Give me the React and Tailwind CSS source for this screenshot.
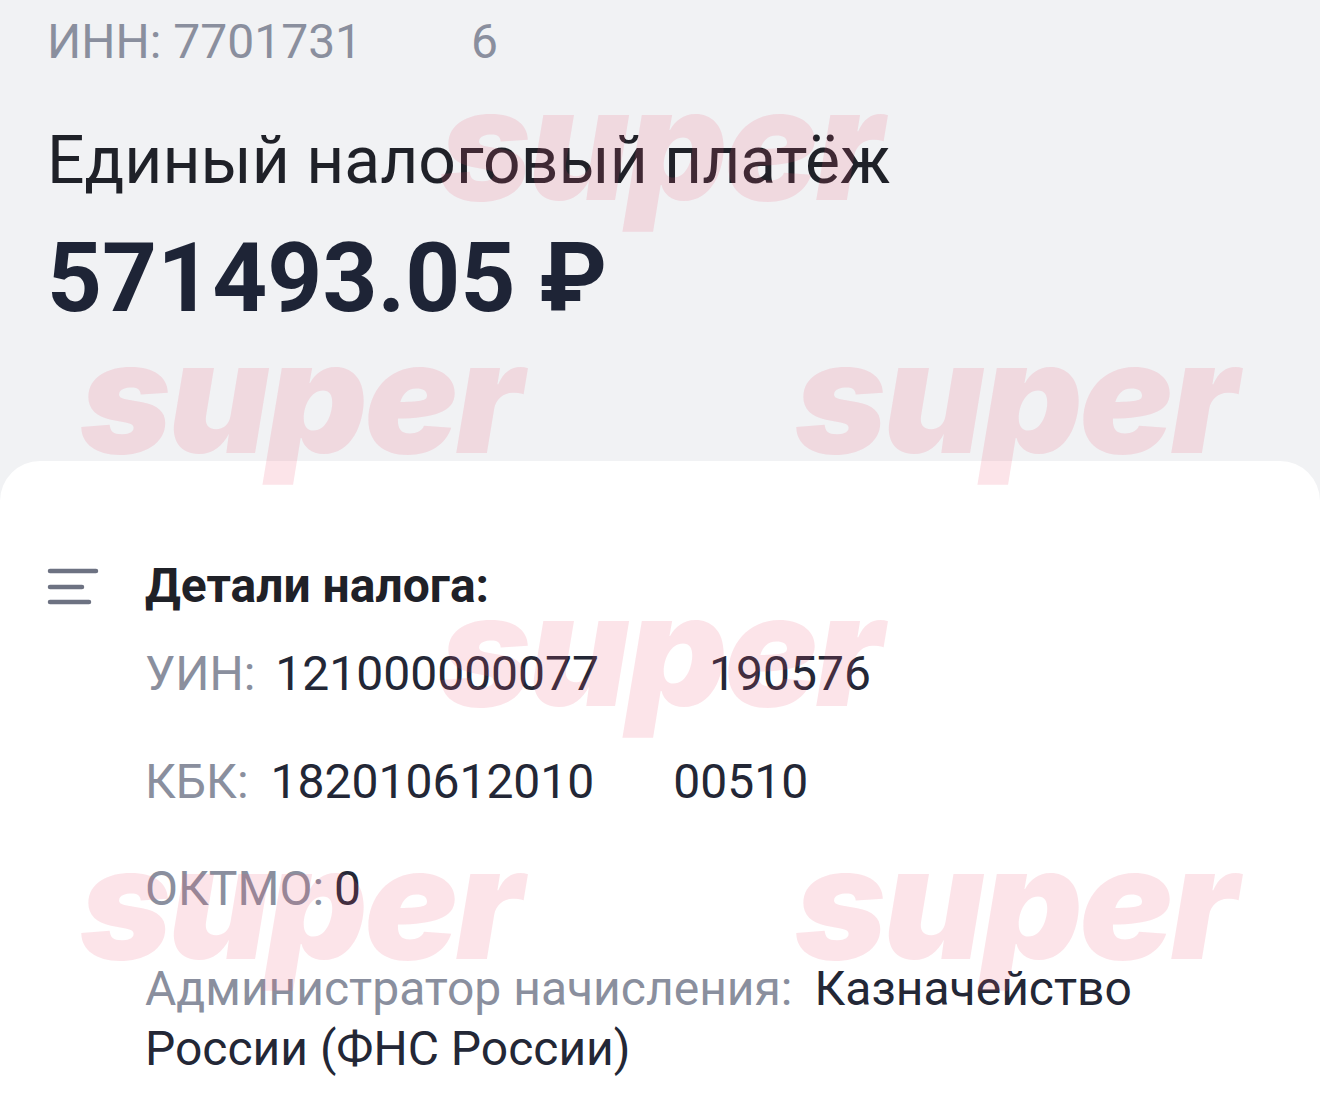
import React from 'react';

// soft pink "super" stamps laid over the screenshot
const Stamp = ({ className }) => (
  <span
    className={`pointer-events-none absolute select-none font-['Inter',sans-serif] text-[156px] font-black italic leading-none tracking-[-3px] text-[rgba(236,88,118,0.16)] ${className}`}
  >
    super
  </span>
);

const Row = ({ label, children, className = '' }) => (
  <p className={`text-[48px] leading-[56px] text-[#232736] ${className}`}>
    <span className="text-[#8a8f9e]">{label}</span>
    {children}
  </p>
);

const App = () => {
  return (
    <div className="relative h-[1097px] w-[1320px] overflow-hidden bg-[#f1f2f4] font-['Roboto',sans-serif]">
      {/* --- Header --- */}
      <header className="px-[47px] pt-[14px]">
        <p className="text-[48px] leading-[56px] text-[#8a8f9e]">
          ИНН: 7701731<span className="ml-[109px]">6</span>
        </p>
        <h1 className="mt-[57px] text-[66px] leading-[68px] text-[#1f2128]">Единый налоговый платёж</h1>
        <p className="mt-[33px] text-[96px] font-bold leading-[100px] text-[#1e2436]">571493.05 ₽</p>
      </header>

      {/* --- Card --- */}
      <section className="mt-[133px] h-[700px] rounded-t-[40px] bg-white pt-[97px]">
        <div className="flex">
          <div className="w-[145px] shrink-0 pl-[47px] pt-[10px]">
            <svg width="52" height="38" viewBox="0 0 52 38" fill="none">
              <path d="M3 3h46M3 19h32M3 34h39" stroke="#6d7282" strokeWidth="4.5" strokeLinecap="round" />
            </svg>
          </div>
          <div className="flex max-w-[1010px] flex-col">
            <h2 className="text-[48px] font-bold leading-[56px] text-[#1f2128]">Детали налога:</h2>
            <Row label="УИН:" className="mt-[32px]">
              <span className="ml-[20px]">121000000077</span>
              <span className="ml-[110px]">190576</span>
            </Row>
            <Row label="КБК:" className="mt-[52px]">
              <span className="ml-[22px]">182010612010</span>
              <span className="ml-[79px]">00510</span>
            </Row>
            <Row label="ОКТМО:" className="mt-[51px]">
              <span className="ml-[10px]">0</span>
            </Row>
            <Row label="Администратор начисления:" className="mt-[42px] leading-[60px]">
              <span className="ml-[22px]">Казначейство России (ФНС России)</span>
            </Row>
          </div>
        </div>
      </section>

      {/* --- Watermarks --- */}
      <Stamp className="left-[440px] top-[66px]" />
      <Stamp className="left-[80px] top-[319px]" />
      <Stamp className="left-[795px] top-[319px]" />
      <Stamp className="left-[440px] top-[572px]" />
      <Stamp className="left-[80px] top-[825px]" />
      <Stamp className="left-[795px] top-[825px]" />
    </div>
  );
};

export default App;
